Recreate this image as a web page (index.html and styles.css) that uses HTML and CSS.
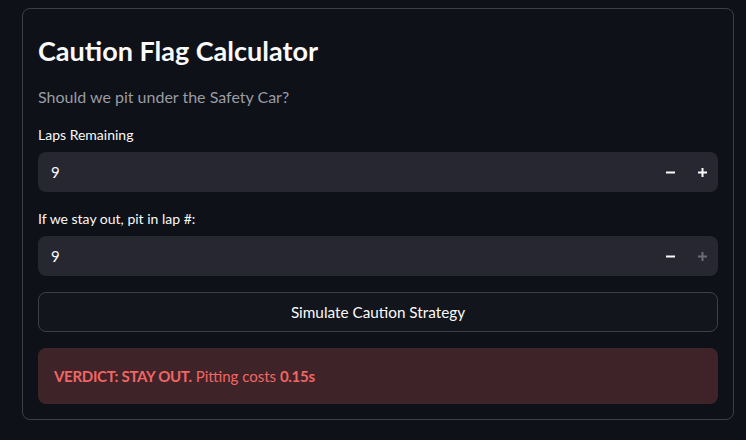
FILE: index.html
```html
<!DOCTYPE html>
<html>
<head>
<meta charset="utf-8">
<link rel="stylesheet" href="styles.css">
</head>
<body>
<div class="card">
  <h1 class="title">Caution Flag Calculator</h1>
  <p class="subtitle">Should we pit under the Safety Car?</p>
  <div class="field">
    <label class="label">Laps Remaining</label>
    <div class="num-input">
      <span class="value">9</span>
      <div class="steps">
        <span class="step"><svg width="9" height="9" viewBox="0 0 9 9"><rect x="0" y="3.5" width="9" height="2" fill="#fafafa"/></svg></span>
        <span class="step"><svg width="9" height="9" viewBox="0 0 9 9"><rect x="0" y="3.5" width="9" height="2" fill="#fafafa"/><rect x="3.5" y="0" width="2" height="9" fill="#fafafa"/></svg></span>
      </div>
    </div>
  </div>
  <div class="field">
    <label class="label">If we stay out, pit in lap #:</label>
    <div class="num-input">
      <span class="value">9</span>
      <div class="steps">
        <span class="step"><svg width="9" height="9" viewBox="0 0 9 9"><rect x="0" y="3.5" width="9" height="2" fill="#fafafa"/></svg></span>
        <span class="step"><svg width="9" height="9" viewBox="0 0 9 9"><rect x="0" y="3.5" width="9" height="2" fill="#6b6c75"/><rect x="3.5" y="0" width="2" height="9" fill="#6b6c75"/></svg></span>
      </div>
    </div>
  </div>
  <button class="btn">Simulate Caution Strategy</button>
  <div class="alert"><b>VERDICT: STAY OUT.</b> Pitting costs <b>0.15s</b></div>
</div>
</body>
</html>
```
FILE: styles.css
```css
html, body {
  margin: 0;
  padding: 0;
  background: #0e1117;
}
body {
  font-family: Lato, "Liberation Sans", sans-serif;
  color: #fafafa;
  padding: 8px 12px 0 22px;
  width: 712px;
}
.card {
  border: 1px solid #3c3f48;
  border-radius: 8px;
  padding: 15px;
  display: flex;
  flex-direction: column;
}
.title {
  margin: 0;
  padding-top: 11px;
  font-size: 27px;
  font-weight: 700;
  line-height: 32px;
  color: #fafafa;
}
.subtitle {
  margin: 0;
  padding-top: 20px;
  font-size: 16px;
  line-height: 20px;
  color: #9a9ca3;
  font-weight: 400;
}
.field {
  display: flex;
  flex-direction: column;
}
.label {
  font-size: 14px;
  line-height: 18px;
  margin-top: 19px;
  margin-bottom: 8px;
}
.field + .field .label {
  margin-top: 18px;
}
.num-input {
  height: 40px;
  background: #262730;
  border-radius: 8px;
  display: flex;
  align-items: center;
  justify-content: space-between;
  padding-left: 13px;
  box-sizing: border-box;
}
.value {
  font-size: 15px;
}
.steps {
  display: flex;
  height: 100%;
}
.step {
  width: 32px;
  display: flex;
  align-items: center;
  justify-content: center;
}
.btn {
  margin-top: 16px;
  height: 40px;
  background: #12151c;
  border: 1px solid #3e4049;
  border-radius: 8px;
  color: #fafafa;
  font-family: inherit;
  font-size: 15.3px;
}
.alert {
  margin-top: 16px;
  height: 56px;
  box-sizing: border-box;
  background: #3e2428;
  border-radius: 8px;
  color: #f26565;
  font-size: 15px;
  display: flex;
  align-items: center;
  padding-left: 16px;
  white-space: pre;
}
.alert b {
  font-weight: 700;
  letter-spacing: -0.3px;
}
```
